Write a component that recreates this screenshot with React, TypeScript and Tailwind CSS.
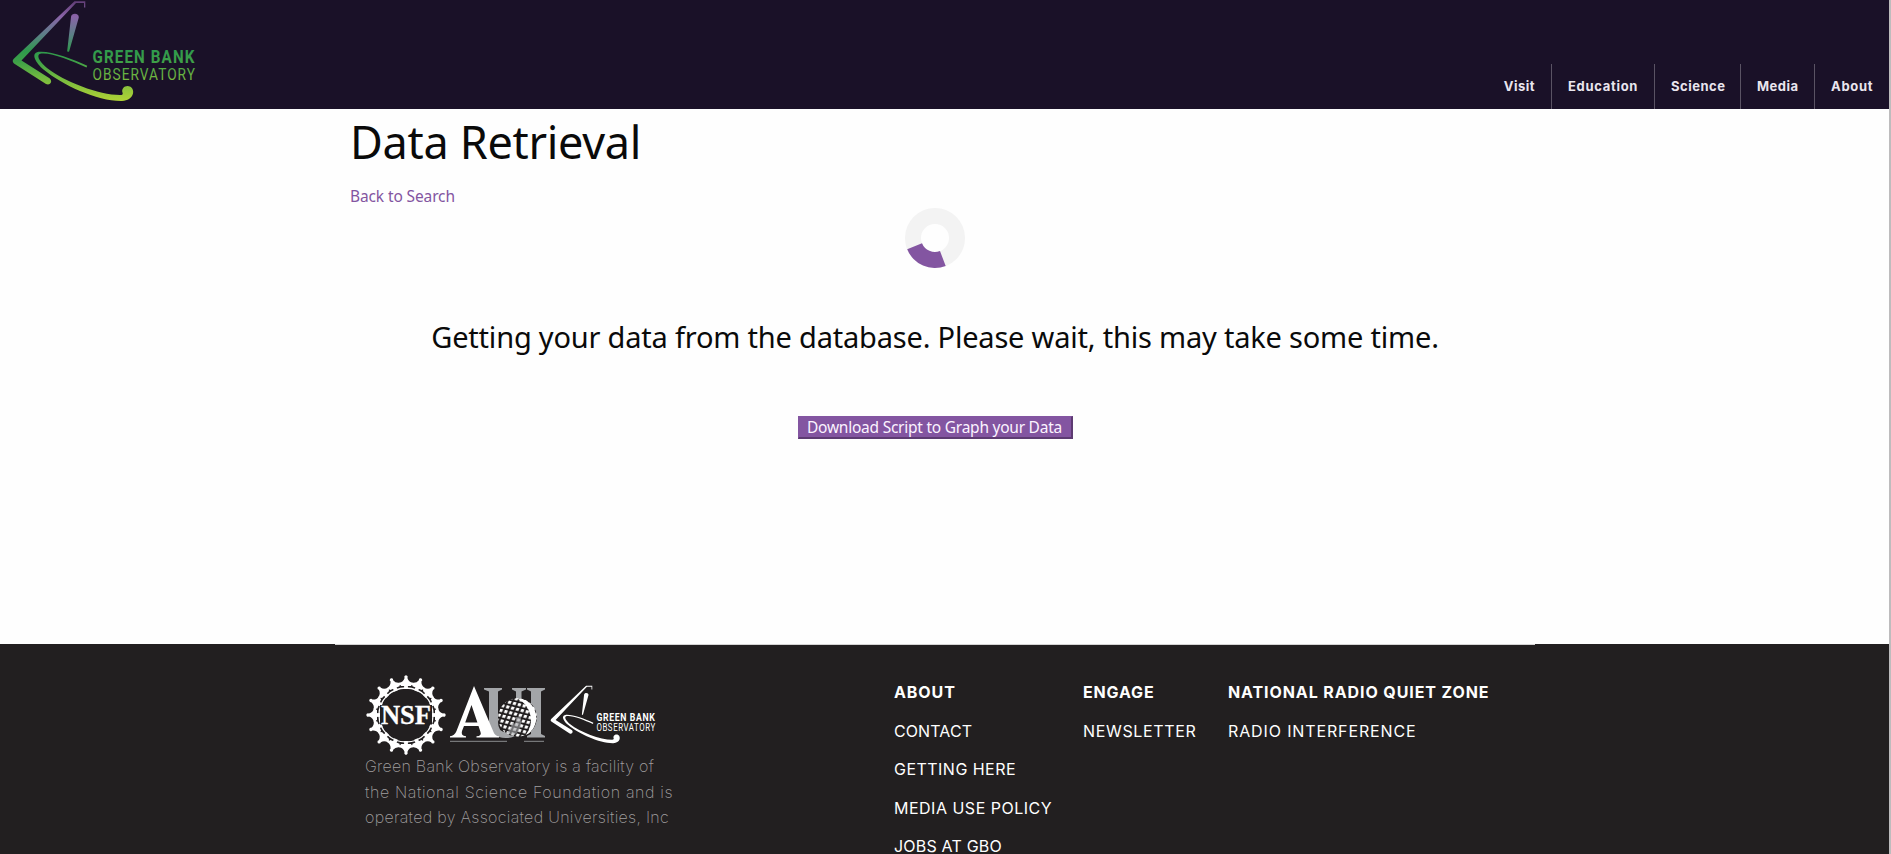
const nav = [
  { label: "Visit", cls: "pr-[16px] tracking-[0.5px]" },
  { label: "Education", cls: "w-[103px] border-l pl-4 tracking-[0.7px]" },
  { label: "Science", cls: "w-[86px] border-l pl-4 tracking-[0.5px]" },
  { label: "Media", cls: "w-[74px] border-l pl-4 tracking-[0.5px]" },
  { label: "About", cls: "w-[75px] border-l pl-4 tracking-[0.7px]" },
];

const columns = [
  {
    title: "ABOUT",
    cls: "w-[189px]",
    titleCls: "tracking-[0.9px]",
    links: [
      { label: "CONTACT", cls: "tracking-[0.1px]" },
      { label: "GETTING HERE", cls: "tracking-[0.47px]" },
      { label: "MEDIA USE POLICY", cls: "tracking-[0.5px]" },
      { label: "JOBS AT GBO", cls: "tracking-[0.2px]" },
    ],
  },
  {
    title: "ENGAGE",
    cls: "w-[145px]",
    titleCls: "tracking-[0.85px]",
    links: [{ label: "NEWSLETTER", cls: "tracking-[0.65px]" }],
  },
  {
    title: "NATIONAL RADIO QUIET ZONE",
    cls: "w-[290px]",
    titleCls: "tracking-[0.9px]",
    links: [{ label: "RADIO INTERFERENCE", cls: "tracking-[0.87px]" }],
  },
];

function ObservatoryLogo({ paint, className }: { paint: string; className: string }) {
  return (
    <svg viewBox="10 0 188 104" className={className} fill={paint}>
      <defs>
        <linearGradient id="gbo" gradientUnits="userSpaceOnUse" x1="90" y1="0" x2="90" y2="102">
          <stop offset="0" stopColor="#5d3a72" />
          <stop offset="0.16" stopColor="#8a63a8" />
          <stop offset="0.34" stopColor="#5c7f87" />
          <stop offset="0.5" stopColor="#2f9a4c" />
          <stop offset="0.6" stopColor="#3c9f48" />
          <stop offset="0.76" stopColor="#72b940" />
          <stop offset="1" stopColor="#b3d335" />
        </linearGradient>
      </defs>
      <path d="M74.5 1.2H85.3V7.5H84V3H76L21.5 60.5 49.5 78.2C53 80.8 50.5 86 46 84L14 63.4Q11.500 61.200 13.800 58.800Z" />
      <path d="M71 17C71.300 12.400 79.200 12.600 78.800 17.400L69.200 51.200Q68 52.600 67.200 51Z" />
      <path d="M87.200 65.700C72 58.500 50 50.500 38.500 51.800C30 53.500 36 63 43.500 69.500C62 85 98 101.500 122 101C134 100.500 135.500 90 130.500 86.800C126 84.400 121 88 122.500 92.500C123.200 94.500 122.500 95 120 95C99 95 64 81.500 47 68C41 63 36 56.500 39.500 54C49 51.500 70 60 86.500 67.500Z" />
      <text x="92.500" y="62.800" fontFamily="Roboto, sans-serif" fontWeight="700" fontSize="17.6" letterSpacing="1.300" textLength="103" lengthAdjust="spacingAndGlyphs">
        GREEN BANK
      </text>
      <text x="92.500" y="80" fontFamily="Roboto, sans-serif" fontWeight="400" fontSize="17.400" letterSpacing="1.300" textLength="103.500" lengthAdjust="spacingAndGlyphs">
        OBSERVATORY
      </text>
    </svg>
  );
}

function NsfLogo() {
  const teeth = Array.from({ length: 16 }, (_, i) => i * 22.5);
  return (
    <svg viewBox="-41 -41 82 82" className="h-[82px] w-[82px] shrink-0">
      {teeth.map((a) => (
        <g key={a} transform={`rotate(${a})`} fill="#fff">
          <path d="M-6.800 -32.200Q-2.600 -33 -1.400 -37A1.700 1.700 0 1 1 1.400 -37Q2.600 -33 6.800 -32.200L5 -29H-5Z" />
          <rect x="-1.900" y="-33" width="3.800" height="7" />
        </g>
      ))}
      <circle r="31.600" fill="none" stroke="#fff" strokeWidth="2" />
      <circle r="27" fill="none" stroke="#fff" strokeWidth="1.300" />
      <rect x="-26" y="-10" width="52" height="19.500" fill="#221f20" />
      <text x="-25" y="9" fill="#fff" stroke="#fff" strokeWidth="0.3" fontFamily="Liberation Serif, serif" fontWeight="700" fontSize="28" textLength="50" lengthAdjust="spacingAndGlyphs">
        NSF
      </text>
    </svg>
  );
}

function AuiLogo() {
  return (
    <svg viewBox="0 0 98 60" className="h-[60px] w-[98px] shrink-0">
      <defs>
        <pattern id="mesh" width="5" height="5" patternUnits="userSpaceOnUse" patternTransform="rotate(14) skewX(-8)">
          <rect width="5" height="5" fill="#1c191a" />
          <rect x="0.800" y="0.800" width="3.100" height="3.100" fill="#fff" />
        </pattern>
        <clipPath id="globe">
          <circle cx="67.500" cy="32.500" r="19.300" />
        </clipPath>
      </defs>
      <path
        fill="#a3a5a8"
        d="M34 3H52V4.500L48 6.500V37Q48 47 56 47Q66 47 66 37V6.500L62 4.500V3H76V4.500L71.500 6.500V38Q71 53 56 53Q40 53 39 38V6.500L34 4.500ZM77 3H95V4.500L91 6.500V49L95 51V52.500H77V51L81 49V6.500L77 4.500Z"
      />
      <g clipPath="url(#globe)">
        <circle cx="67.500" cy="32.500" r="20" fill="url(#mesh)" />
        <path d="M66 13A20 20 0 0 1 75 51A24 24 0 0 0 66 13Z" fill="#fff" />
        <path d="M62 37Q66 42 66 32H71V38Q71 46 64 50L55 48Q61 46 62 37Z" fill="#a3a5a8" opacity="0.6" />
      </g>
      <path
        fill="#fff"
        fillRule="evenodd"
        d="M24 1L43.500 47Q45 51 49 51.300V52.500H26.500V51.300Q32 51 30.500 47L28.500 41H14L12 46Q10.500 51 16 51.300V52.500H0V51.300Q4.500 51 6.500 46ZM21.500 20L15.200 37.500H27.400Z"
      />
      <path d="M0 56.300H57M74 56.300H94" stroke="#8d8e90" strokeWidth="1" />
    </svg>
  );
}

export default function App() {
  return (
    <div className="flex h-[854px] w-full overflow-hidden bg-[#fefefe] font-['Noto_Sans',sans-serif] text-[#0a0a0a]">
      <div className="flex min-w-0 flex-1 flex-col">
        <header className="flex h-[109px] shrink-0 items-end justify-between bg-[#1a1128]">
          <div className="self-start pl-[10px]">
            <ObservatoryLogo paint="url(#gbo)" className="h-[104px] w-[188px]" />
          </div>
          <nav className="flex h-[45px] font-['Inter',sans-serif] text-[13px] leading-[45px] font-bold text-[#e9e5ee]">
            {nav.map((n) => (
              <a key={n.label} className={`border-[#5a5364] ${n.cls}`}>
                {n.label}
              </a>
            ))}
          </nav>
        </header>

        <main className="flex h-[535px] w-[1870px] shrink-0 flex-col pt-[7px]">
          <div className="mx-auto flex w-[1200px] flex-col px-[15px]">
            <h1 className="text-[45px] leading-[51px] tracking-[-0.3px]">Data Retrieval</h1>
            <a className="mt-[17px] text-[15.5px] leading-6 tracking-[-0.12px] text-[#8355a1]">Back to Search</a>
            <svg viewBox="-30 -30 60 60" className="h-[60px] w-[60px] self-center">
              <circle r="22" fill="none" stroke="#f3f3f3" strokeWidth="16" />
              <path d="M-27.800 11.200A30 30 0 0 0 10.700 28L5 13.100A14 14 0 0 1 -13 5.200Z" fill="#8355a1" />
            </svg>
            <h2 className="mt-[49px] text-center text-[29px] leading-10 tracking-[-0.2px]">
              Getting your data from the database. Please wait, this may take some time.
            </h2>
            <button className="mt-[59px] h-[23px] w-[275px] self-center border-t border-r-2 border-b-2 border-l border-t-[#8355a1] border-r-[#5d3b72] border-b-[#5d3b72] border-l-[#8355a1] bg-[#8355a1] text-[15.5px] leading-5 tracking-[-0.24px] whitespace-nowrap text-[#fbf3ff]">
              Download Script to Graph your Data
            </button>
          </div>
        </main>

        <footer className="h-[210px] shrink-0 overflow-hidden bg-[#221f20] font-['Inter',sans-serif] text-[16px] text-[#fefefe]">
          <div className="w-[1870px]">
            <div className="mx-auto flex w-[1200px] border-t border-[#d4d3d3]">
              <div className="w-[559px] pl-[30px]">
                <div className="flex h-[109px] pt-[29px]">
                  <NsfLogo />
                  <div className="flex pt-[11px] pl-[3px]">
                    <AuiLogo />
                    <ObservatoryLogo paint="#fff" className="ml-[1px] h-[60px] w-[108px]" />
                  </div>
                </div>
                <p className="leading-[25.6px] font-extralight text-[#a09e9f]">
                  <span className="block tracking-[0.25px]">Green Bank Observatory is a facility of</span>
                  <span className="block tracking-[0.62px]">the National Science Foundation and is</span>
                  <span className="block tracking-[0.3px]">operated by Associated Universities, Inc</span>
                </p>
              </div>
              <div className="flex pt-[28px] leading-[38.5px] whitespace-nowrap">
                {columns.map((c) => (
                  <div key={c.title} className={c.cls}>
                    <h3 className={`font-bold ${c.titleCls}`}>{c.title}</h3>
                    {c.links.map((l) => (
                      <a key={l.label} className={`block ${l.cls}`}>
                        {l.label}
                      </a>
                    ))}
                  </div>
                ))}
              </div>
            </div>
          </div>
        </footer>
      </div>
      <div className="w-[2px] shrink-0 bg-[#bdbcbd]" />
    </div>
  );
}
